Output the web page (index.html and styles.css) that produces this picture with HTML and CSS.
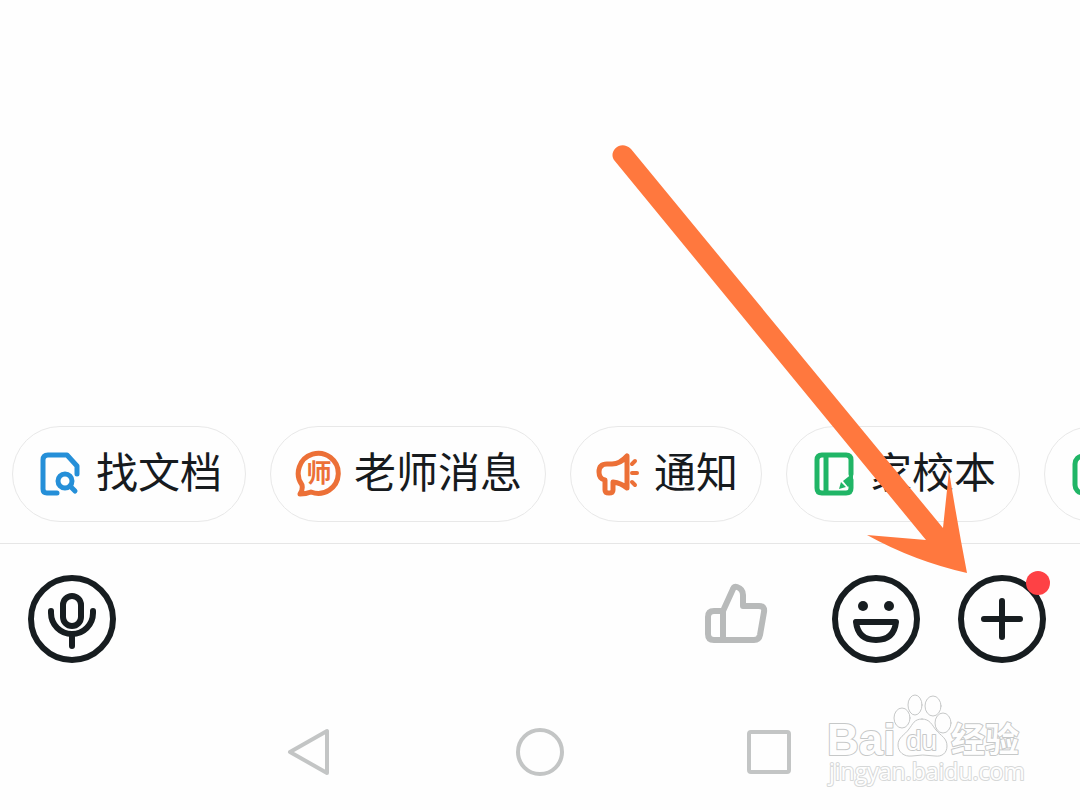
FILE: index.html
```html
<!DOCTYPE html>
<html lang="zh-CN">
<head>
  <meta charset="utf-8">
  <title>聊天</title>
  <meta name="viewport" content="width=device-width, initial-scale=1">
  <link rel="stylesheet" href="styles.css">
</head>
<body>
  <main class="messages"></main>

  <div class="shortcuts">
    <button type="button" class="chip">
      <svg class="chip-icon blue" viewBox="0 0 48 48">
        <path d="M21 43H11Q7 43 7 39V10Q7 5 12 5H31L41 16V24"/>
        <circle cx="29" cy="31" r="7"/>
        <path d="M34 36L39 41"/>
      </svg>
      <span class="chip-label">找文档</span>
    </button>
    <button type="button" class="chip">
      <svg class="chip-icon orange" viewBox="0 0 48 48">
        <path d="M8 35A20 20 0 1 1 17 42Q12 44 6 44Q9 40 8 35Z"/>
        <text class="badge-text" x="25" y="32">师</text>
      </svg>
      <span class="chip-label">老师消息</span>
    </button>
    <button type="button" class="chip">
      <svg class="chip-icon orange" viewBox="0 0 48 48">
        <path d="M13 14H18Q26 14 33 6V38Q27 33 19 32V40Q19 43 15 43Q11 43 11 40V30Q5 29 5 22Q5 14 13 14Z"/>
        <path class="rays" d="M38 14L41 11M38 23H43M38 32L41 35"/>
      </svg>
      <span class="chip-label">通知</span>
    </button>
    <button type="button" class="chip">
      <svg class="chip-icon green" viewBox="0 0 48 48">
        <path d="M41 24V10Q41 5 36 5H12Q7 5 7 10V38Q7 43 12 43H36Q41 43 41 38V30M16 5V43"/>
        <path class="solid" d="M43 23L33 31L38 37L43 32ZM31 32L36 37L29 39Z"/>
      </svg>
      <span class="chip-label">家校本</span>
    </button>
    <button type="button" class="chip chip-more" aria-label="更多">
      <svg class="chip-icon green" viewBox="0 0 48 48">
        <rect x="7" y="6" width="34" height="37" rx="8"/>
      </svg>
    </button>
  </div>

  <form class="toolbar">
    <button type="button" class="tool" aria-label="语音">
      <svg viewBox="0 0 88 88">
        <circle cx="44" cy="44" r="41"/>
        <rect x="35" y="21" width="18" height="30" rx="9"/>
        <path d="M23 36V38A21 21 0 0 0 65 38V36M44 60V71"/>
      </svg>
    </button>
    <input type="text" class="message-input" aria-label="消息">
    <button type="button" class="tool-like" aria-label="点赞">
      <svg viewBox="0 0 64 64">
        <path d="M19 59H10Q4 59 4 53V36Q4 30 10 30H19ZM19 30L29 8Q30 5 33 6Q39 8 39 14V25H55Q61 25 60 31L56 54Q55 59 50 59H19"/>
      </svg>
    </button>
    <button type="button" class="tool" aria-label="表情">
      <svg viewBox="0 0 88 88">
        <circle cx="44" cy="44" r="41"/>
        <circle class="dot" cx="31" cy="31" r="5"/>
        <circle class="dot" cx="57" cy="31" r="5"/>
        <path d="M24 47H64Q62 65 44 65Q26 65 24 47Z"/>
      </svg>
    </button>
    <button type="button" class="tool tool-add" aria-label="更多功能">
      <svg viewBox="0 0 88 88">
        <circle cx="44" cy="44" r="41"/>
        <path d="M26 44H62M44 26V62"/>
      </svg>
      <span class="red-dot"></span>
    </button>
  </form>

  <nav class="system-nav">
    <button type="button" aria-label="返回">
      <svg viewBox="0 0 48 48"><path d="M41 3V45L4 24Z"/></svg>
    </button>
    <button type="button" aria-label="主页">
      <svg viewBox="0 0 48 48"><circle cx="24" cy="24" r="22"/></svg>
    </button>
    <button type="button" aria-label="最近任务">
      <svg viewBox="0 0 48 48"><rect x="3" y="4" width="40" height="40" rx="2"/></svg>
    </button>
  </nav>

  <!-- guide arrow pointing at the add button -->
  <svg class="arrow" viewBox="600 130 380 450">
    <path d="M614 160C608 151 621 139 631 149L943 528L949 471Q957 521 967 573Q914 561 867 535L926 540Z"/>
  </svg>

  <svg class="watermark" viewBox="820 690 210 100">
    <text class="wm-latin" x="827" y="755">Bai</text>
    <ellipse cx="902" cy="718" rx="8" ry="10"/>
    <ellipse cx="915" cy="705" rx="7" ry="10"/>
    <ellipse cx="933" cy="706" rx="8" ry="10"/>
    <ellipse cx="943" cy="723" rx="8" ry="10"/>
    <path d="M922 719C930 719 932 725 936 730C941 736 947 738 947 746C947 753 942 757 935 756Q922 754 912 756C904 757 898 752 898 745C898 737 905 735 909 729C913 724 914 719 922 719Z"/>
    <text class="wm-du" x="906" y="750">du</text>
    <text class="wm-cjk" x="951" y="752">经验</text>
    <text class="wm-url" x="829" y="780">jingyan.baidu.com</text>
  </svg>
</body>
</html>
```
FILE: styles.css
```css
* {
  box-sizing: border-box;
}
body {
  position: relative;
  display: flex;
  flex-direction: column;
  min-height: 100vh;
  margin: 0;
  overflow: hidden;
  background: #fefefe;
  color: #171b1e;
  font-family: "Noto Sans CJK SC", sans-serif;
}
button {
  padding: 0;
  border: none;
  background: none;
  color: inherit;
  font-family: inherit;
  cursor: pointer;
}
svg {
  display: block;
  fill: none;
  stroke-linecap: round;
  stroke-linejoin: round;
}
.messages {
  flex: 1;
}
.shortcuts {
  display: flex;
  gap: 24px;
  padding: 0 12px 21px;
  overflow: hidden;
  border-bottom: 1px solid #e6e6e6;
}
.chip {
  display: flex;
  flex-shrink: 0;
  align-items: center;
  gap: 12px;
  height: 96px;
  padding: 0 23px;
  border: 1px solid #e8e8e8;
  border-radius: 48px;
  font-size: 42px;
  line-height: 60px;
  white-space: nowrap;
}
.chip-label {
  padding-bottom: 8px;
}
.chip-more {
  width: 234px;
}
.chip-icon {
  width: 48px;
  height: 48px;
  stroke: currentColor;
  stroke-width: 5;
}
.blue {
  color: #258fd8;
}
.orange {
  color: #ec7037;
}
.green {
  color: #20b566;
}
.rays {
  stroke-width: 4;
}
.solid {
  fill: currentColor;
  stroke: none;
}
.badge-text {
  fill: currentColor;
  stroke: none;
  font-size: 25px;
  font-weight: bold;
  text-anchor: middle;
}
.toolbar {
  display: flex;
  align-items: center;
  padding: 31px 34px 31px 28px;
}
.tool {
  width: 88px;
  height: 88px;
}
.tool svg {
  stroke: #171d20;
  stroke-width: 6;
}
.tool .dot {
  fill: #171d20;
  stroke: none;
}
.message-input {
  flex: 1;
  min-width: 0;
  height: 88px;
  padding: 0 24px;
  border: none;
  outline: none;
  background: none;
  font-family: inherit;
  font-size: 42px;
}
.tool-like {
  width: 64px;
  height: 64px;
  margin: 0 64px 12px 0;
}
.tool-like svg {
  stroke: #b8baba;
  stroke-width: 6;
}
.tool-add {
  position: relative;
  margin-left: 38px;
}
.red-dot {
  position: absolute;
  top: -4px;
  right: -4px;
  width: 24px;
  height: 24px;
  border-radius: 50%;
  background: #fe4145;
}
.system-nav {
  display: flex;
  justify-content: space-around;
  padding: 34px 18%;
}
.system-nav button {
  width: 48px;
  height: 48px;
}
.system-nav svg {
  stroke: #c3c5c5;
  stroke-width: 4;
}
.arrow {
  position: absolute;
  right: 100px;
  bottom: 230px;
  width: 380px;
  height: 450px;
  fill: #ff783e;
  pointer-events: none;
}
.watermark {
  position: absolute;
  right: 50px;
  bottom: 20px;
  width: 210px;
  height: 100px;
  fill: #fefefe;
  stroke: #c6c8c8;
  stroke-width: 1;
  pointer-events: none;
}
.watermark text {
  stroke-width: 2;
  paint-order: stroke;
}
.wm-latin {
  font: bold 44px "Liberation Sans", sans-serif;
}
.wm-du {
  font: 28px "Liberation Sans", sans-serif;
}
.wm-cjk {
  font: bold 34px "Noto Sans CJK SC", sans-serif;
}
.wm-url {
  stroke: #d6d8d8;
  font: 23px "Open Sans", sans-serif;
}
```
